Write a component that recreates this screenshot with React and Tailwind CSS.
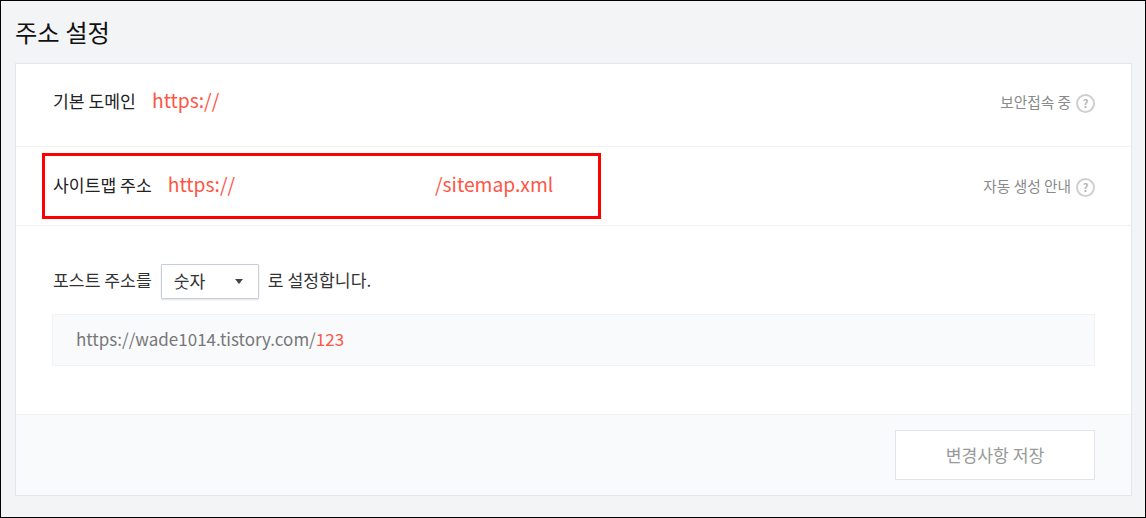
// App.jsx - 주소 설정 panel
import React from 'react';

const FONT = { fontFamily: '"Noto Sans CJK KR", "Noto Sans", sans-serif' };

function HelpIcon() {
  return (
    <span className="ml-[5px] mt-[6px] flex h-[19px] w-[19px] items-center justify-center rounded-full border-2 border-[#cfcfcf] text-[11px] font-bold leading-none text-[#b5b5b5]">
      ?
    </span>
  );
}

function Row({ label, help, children, height }) {
  return (
    <div className={`flex items-center justify-between border-b border-[#f1f2f4] pl-[37px] pr-[36px] ${height}`}>
      <div className="flex items-center">
        <span className="text-[17.2px] text-[#222222]">{label}</span>
        <span className="ml-[16px] text-[19.3px] text-[#ff5544]">{children}</span>
      </div>
      <div className="flex items-center text-[14.7px] text-[#8a8a8a]">
        <span className="mt-[3px]">{help}</span>
        <HelpIcon />
      </div>
    </div>
  );
}

export default function App() {
  return (
    <div
      className="relative h-[518px] w-[1146px] border border-black bg-[#f3f4f6] pl-[14px] pr-[13px]"
      style={FONT}
    >
      <h1 className="flex h-[62px] items-center text-[24.3px] font-normal text-[#111111]">주소 설정</h1>

      <div className="h-[433px] border border-[#e4e6ed] bg-white">
        <Row label="기본 도메인" help="보안접속 중" height="h-[83px] pb-[9px]">
          https://
        </Row>
        <Row label="사이트맵 주소" help="자동 생성 안내" height="h-[79px] pb-[3px]">
          https://<span className="ml-[200px]">/sitemap.xml</span>
        </Row>

        <div className="h-[189px] border-b border-[#f1f2f4] pl-[36px] pr-[36px] pt-[38px]">
          <div className="flex items-center text-[17.2px] text-[#333333]">
            <span className="ml-[1px] pb-[3px]">포스트 주소를</span>
            <div className="ml-[9px] mr-[9px] flex h-[35px] w-[98px] items-center justify-between rounded-[1px] border border-[#c5ced9] pb-[1px] pl-[12px] pr-[15px] shadow-[0_1px_2px_rgba(0,0,0,0.12)]">
              <span>숫자</span>
              <span className="h-0 w-0 border-x-[4px] border-t-[5px] border-x-transparent border-t-[#444444]" />
            </div>
            <span className="pb-[3px]">로 설정합니다.</span>
          </div>
          <div className="mt-[15px] flex h-[52px] items-center border border-[#f1f2f5] bg-[#f9fafc] pb-[2px] pl-[23px] text-[17px] text-[#777777]">
            https://wade1014.tistory.com/<span className="text-[#ff5544]">123</span>
          </div>
        </div>

        <div className="flex h-[80px] justify-end bg-[#f9fafc] pr-[36px] pt-[15px]">
          <button className="h-[50px] w-[200px] border border-[#e2e4ec] bg-white text-[17.2px] text-[#999999]">
            변경사항 저장
          </button>
        </div>
      </div>

      {/* red annotation box */}
      <div className="pointer-events-none absolute left-[41px] top-[152px] h-[66px] w-[559px] border-[3px] border-[#ff0000]" />
    </div>
  );
}
